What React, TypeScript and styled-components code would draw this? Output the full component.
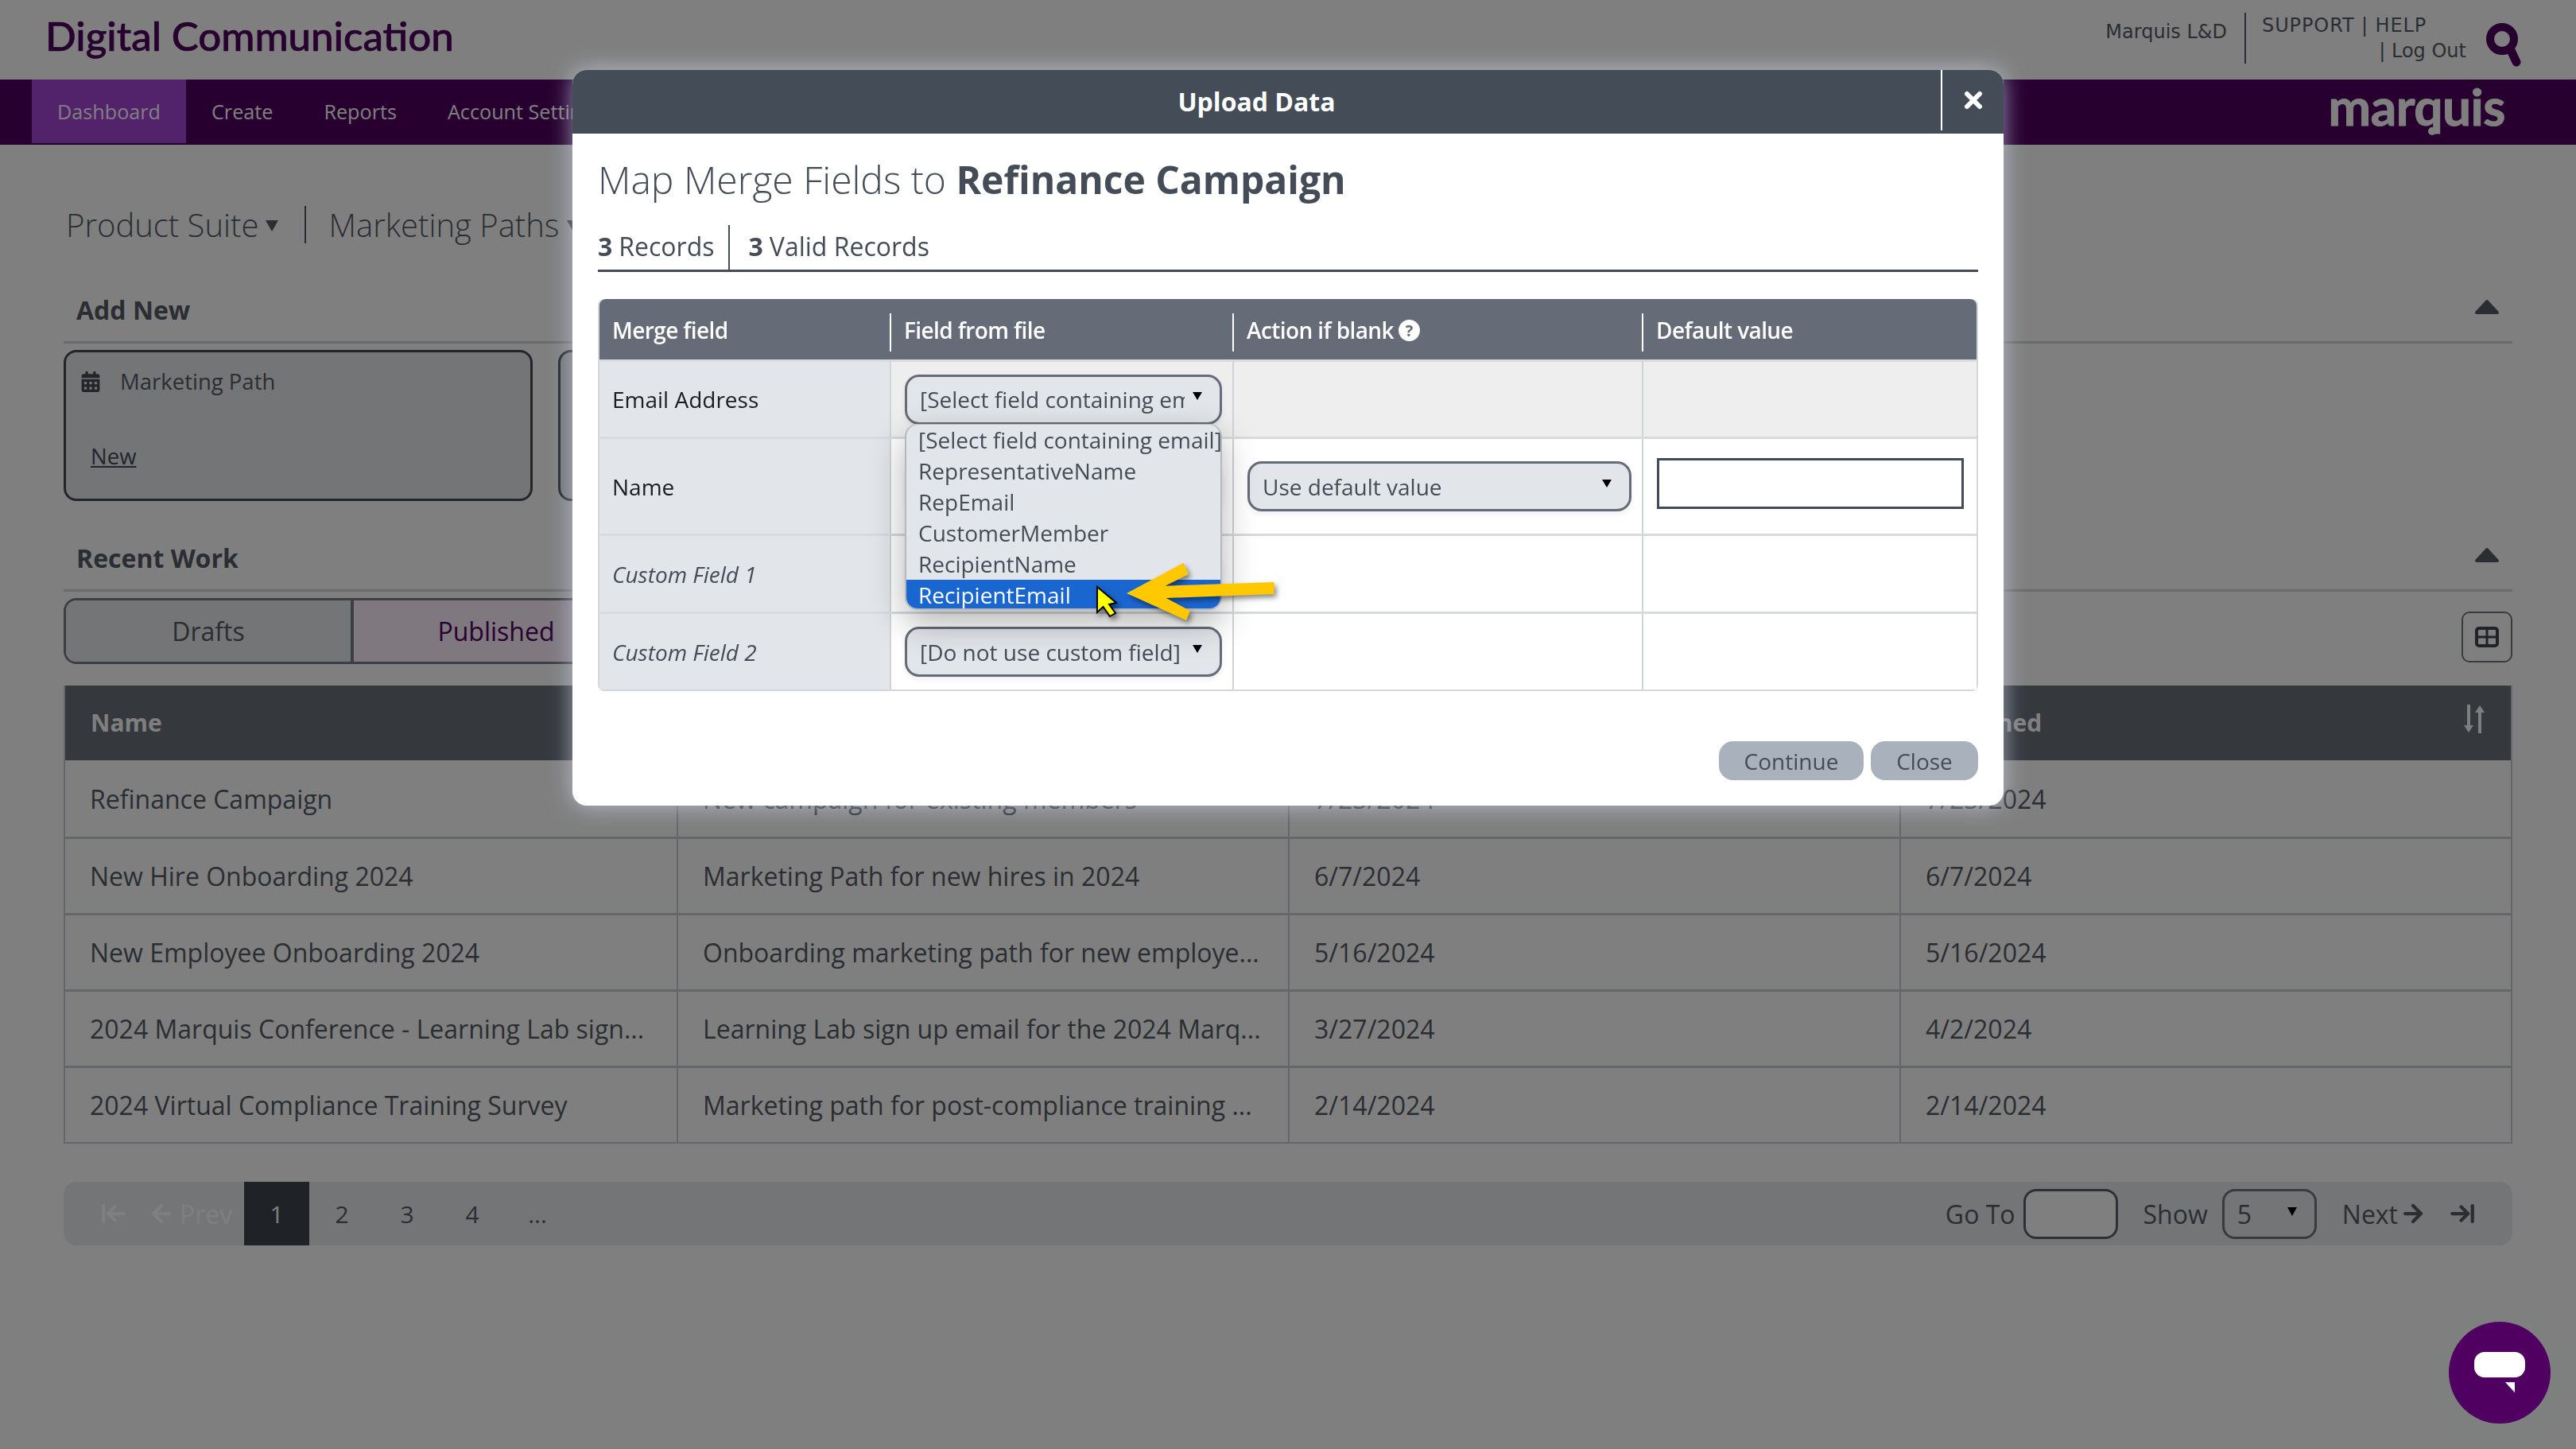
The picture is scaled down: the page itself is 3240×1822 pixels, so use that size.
import React from 'react';
import styled, { createGlobalStyle } from 'styled-components';
import { ArrowLeft, ArrowLeftToLine, ArrowRight, ArrowRightToLine } from 'lucide-react';
import { FaCalendarAlt } from 'react-icons/fa';

const ink = '#555c66';
const slate = '#444c57';
const purple = '#4f0060';

const GlobalStyle = createGlobalStyle`
  html, body {
    margin: 0;
    width: 3240px;
    height: 1822px;
    overflow: hidden;
    background: #fff;
    font-family: 'Open Sans', 'Liberation Sans', sans-serif;
    color: ${ink};
  }
  * { box-sizing: border-box; }
`;

const Page = styled.div`
  width: 3240px;
  height: 1822px;
  overflow: hidden;
`;

const Header = styled.header`
  height: 100px;
  display: flex;
  align-items: center;
  padding: 0 68px 0 57px;
`;

const AppTitle = styled.h1`
  margin: 0 0 12px;
  font-family: Lato, sans-serif;
  font-size: 51px;
  font-weight: 500;
  -webkit-text-stroke: 0.7px ${purple};
  color: ${purple};
`;

const HeaderRight = styled.div`
  margin-left: auto;
  display: flex;
  align-items: center;
  font-family: 'DejaVu Sans', sans-serif;
  font-size: 24px;
`;

const AccountName = styled.span`
  padding-right: 22px;
  margin-bottom: 20px;
`;

const Links = styled.div`
  width: 279px;
  height: 64px;
  margin-bottom: 4px;
  padding-left: 20px;
  border-left: 2px solid ${ink};
  display: flex;
  flex-direction: column;
  justify-content: space-between;
`;

const LinkRow = styled.div<{ $end?: boolean }>`
  align-self: ${(p) => (p.$end ? 'flex-end' : 'flex-start')};
  line-height: 32px;
  letter-spacing: ${(p) => (p.$end ? '0' : '0.9px')};
`;

const SearchIcon = styled.svg`
  margin: 14px 0 0 24px;
  display: block;
`;

const Nav = styled.nav`
  height: 82px;
  padding: 0 89px 2px 40px;
  background: ${purple};
  display: flex;
  align-items: stretch;
`;

const NavItem = styled.a<{ $active?: boolean }>`
  padding: 0 32px;
  display: flex;
  align-items: center;
  font-size: 25.2px;
  color: #fff;
  background: ${(p) => (p.$active ? '#a444d6' : 'transparent')};
`;

const Logo = styled.div`
  margin-left: auto;
  position: relative;
  align-self: center;
  font-family: Lato, sans-serif;
  font-size: 64px;
  line-height: 66px;
  font-weight: 700;
  letter-spacing: -0.5px;
  -webkit-text-stroke: 1px #fff;
  color: #fff;
  margin-top: -12px;
`;

const LogoDot = styled.i`
  position: absolute;
  left: 125px;
  bottom: -3px;
  width: 10px;
  height: 10px;
  border-radius: 50%;
  background: #fff;
`;

const Content = styled.main`
  padding: 77px 80px 0;
`;

const SuiteBar = styled.div`
  height: 47px;
  padding-left: 3px;
  display: flex;
  align-items: center;
  font-size: 40px;
  font-weight: 300;
`;

const Caret = styled.i<{ $size?: number; $dark?: boolean }>`
  display: inline-block;
  width: 0;
  height: 0;
  border-left: ${(p) => (p.$size ?? 8) * 0.62}px solid transparent;
  border-right: ${(p) => (p.$size ?? 8) * 0.62}px solid transparent;
  border-top: ${(p) => p.$size ?? 8}px solid ${(p) => (p.$dark ? '#000' : ink)};
`;

const SuiteCaret = styled(Caret)`
  margin: 2px 33px 0 9px;
`;

const SuiteSep = styled.span`
  width: 2px;
  height: 47px;
  margin-right: 28px;
  background: ${ink};
`;

const SectionHead = styled.div<{ $gap: number }>`
  margin-top: ${(p) => p.$gap}px;
  height: 82px;
  padding: 0 16px;
  display: flex;
  align-items: center;
  justify-content: space-between;
  border-bottom: 3px solid #d4d6da;
`;

const SectionTitle = styled.h2`
  margin: 0;
  font-size: 32px;
  font-weight: 700;
`;

const CollapseIcon = styled.svg`
  display: block;
  margin-bottom: 8px;
`;

const Cards = styled.div`
  margin-top: 8px;
  display: flex;
  gap: 32px;
`;

const Card = styled.div`
  width: 590px;
  height: 190px;
  padding: 18px 18px 35px;
  border: 3px solid ${slate};
  border-radius: 16px;
  background: #e8eaee;
  display: flex;
  flex-direction: column;
  justify-content: space-between;
  font-size: 27.5px;
`;

const CardLabel = styled.div`
  display: flex;
  align-items: center;
  gap: 24px;
  svg { font-size: 26px; color: ${slate}; }
`;

const CardLink = styled.a`
  margin-left: 13px;
  text-decoration: underline;
  color: ${slate};
`;

const Toolbar = styled.div`
  margin-top: 8px;
  height: 83px;
  display: flex;
  align-items: center;
  justify-content: space-between;
`;

const Tabs = styled.div`
  height: 83px;
  display: flex;
  border: 3px solid #777d87;
  border-radius: 16px;
  overflow: hidden;
`;

const Tab = styled.div<{ $active?: boolean; $width: number }>`
  width: ${(p) => p.$width}px;
  display: flex;
  align-items: center;
  justify-content: center;
  font-size: 32px;
  color: ${(p) => (p.$active ? purple : ink)};
  background: ${(p) => (p.$active ? '#fef0ff' : '#e8eaee')};
  & + & { border-left: 4px solid #777d87; }
`;

const GridButton = styled.div`
  width: 64px;
  height: 64px;
  margin-top: 14px;
  border: 2px solid #70767f;
  border-radius: 10px;
  display: flex;
  align-items: center;
  justify-content: center;
`;

const DataTable = styled.div`
  margin-top: 27px;
  border: 2px solid #c8ccd2;
  border-top: 0;
`;

const DataHead = styled.div`
  height: 94px;
  display: grid;
  grid-template-columns: repeat(4, 1fr);
  align-items: center;
  padding-bottom: 2px;
  background: #6a707a;
  color: #fff;
  font-size: 30px;
  font-weight: 700;
`;

const HeadCell = styled.div`
  padding-left: 32px;
  display: flex;
  justify-content: space-between;
  align-items: center;
  svg { margin-right: 32px; margin-top: -8px; }
`;

const DataRow = styled.div`
  height: 96px;
  display: grid;
  grid-template-columns: repeat(4, 1fr);
  & + & { border-top: 3px solid #c8ccd2; }
`;

const DataCell = styled.div`
  padding-left: 31px;
  display: flex;
  align-items: center;
  font-size: 32px;
  font-weight: 400;
  white-space: nowrap;
  & + & { border-left: 2px solid #c8ccd2; }
`;

const Pager = styled.div`
  margin-top: 48px;
  height: 80px;
  padding: 0 46px 0 46px;
  border-radius: 16px;
  background: #e8eaee;
  display: flex;
  align-items: center;
  font-size: 32px;
  font-weight: 400;
`;

const PagerDisabled = styled.div`
  width: 181px;
  display: flex;
  align-items: center;
  color: #fff;
  gap: 6px;
`;

const FirstIcon = styled(ArrowLeftToLine)`
  margin-right: 20px;
`;

const PageNum = styled.div<{ $active?: boolean }>`
  width: 82px;
  height: 80px;
  display: flex;
  align-items: center;
  justify-content: center;
  font-size: 30px;
  color: ${(p) => (p.$active ? '#fff' : ink)};
  background: ${(p) => (p.$active ? '#3e444e' : 'transparent')};
`;

const PagerRight = styled.div`
  margin-left: auto;
  display: flex;
  align-items: center;
`;

const SmallBox = styled.div<{ $gap: number }>`
  width: 119px;
  height: 63px;
  margin: 0 ${(p) => p.$gap}px 0 10px;
  padding: 0 22px 0 16px;
  border: 3px solid #5b626c;
  border-radius: 16px;
  display: flex;
  align-items: center;
  justify-content: space-between;
  background: #fff;
`;

const ShowBox = styled(SmallBox)`
  margin-left: 18px;
  background: #e8eaee;
  border-color: #70767f;
`;

const ShowCaret = styled(Caret)`
  margin-top: -6px;
`;

const NextIcon = styled(ArrowRight)`
  margin: 0 28px 0 2px;
`;

const Overlay = styled.div`
  position: fixed;
  inset: 0;
  background: rgba(0, 0, 0, 0.5);
`;

const Modal = styled.section`
  position: fixed;
  left: 720px;
  top: 88px;
  width: 1800px;
  height: 925px;
  border-radius: 18px;
  background: #fff;
  box-shadow: 0 0 28px rgba(205, 215, 235, 0.7);
  color: ${slate};
`;

const ModalHead = styled.div`
  height: 80px;
  display: flex;
  align-items: stretch;
  border-radius: 18px 18px 0 0;
  background: ${slate};
  color: #fff;
`;

const ModalTitle = styled.div`
  flex: 1;
  display: flex;
  align-items: center;
  justify-content: center;
  font-size: 32px;
  font-weight: 700;
  padding-bottom: 2px;
`;

const ModalClose = styled.div`
  width: 79px;
  height: 76px;
  border-left: 2px solid #fff;
  display: flex;
  align-items: center;
  justify-content: center;
`;

const ModalBody = styled.div`
  position: relative;
  padding: 0 32px;
`;

const MapTitle = styled.h3`
  margin: 0;
  height: 115px;
  padding-top: 28px;
  font-size: 48px;
  line-height: 60px;
  font-weight: 300;
  b { font-weight: 700; }
`;

const Counts = styled.div`
  height: 59px;
  display: flex;
  align-items: stretch;
  border-bottom: 3px solid ${slate};
  font-size: 32px;
  font-weight: 400;
  b { font-weight: 700; }
`;

const Count = styled.div`
  padding: 0 17px 4px 0;
  display: flex;
  align-items: center;
  gap: 8px;
  & + & { border-left: 2px solid ${slate}; padding-left: 24px; }
`;

const MapTable = styled.div`
  margin-top: 34px;
  width: 1736px;
  border-radius: 8px;
  border: 2px solid #d4d7dc;
  border-top: 0;
`;

const mapColumns = '365px 431px 515px 1fr';

const MapHead = styled.div`
  height: 76px;
  display: grid;
  grid-template-columns: ${mapColumns};
  align-items: center;
  border-radius: 8px 8px 0 0;
  background: #666c77;
  color: #fff;
  font-size: 28px;
  font-weight: 600;
  letter-spacing: -0.6px;
`;

const MapHeadCell = styled.div`
  height: 48px;
  margin-top: 8px;
  padding: 0 0 6px 16px;
  display: flex;
  align-items: center;
  gap: 6px;
  & + & { border-left: 2px solid #fff; }
`;

const HelpIcon = styled.span`
  width: 27px;
  height: 27px;
  border-radius: 50%;
  background: #fff;
  color: #666c77;
  font-size: 20px;
  font-weight: 700;
  display: flex;
  align-items: center;
  justify-content: center;
  letter-spacing: 0;
`;

const MapRow = styled.div<{ $height: number; $shaded?: boolean }>`
  height: ${(p) => p.$height}px;
  display: grid;
  grid-template-columns: ${mapColumns};
  background: ${(p) => (p.$shaded ? '#eeeeee' : '#fff')};
  border-top: 3px solid #d8dade;
  &:first-of-type { border-top: 0; }
`;

const MapCell = styled.div<{ $label?: boolean; $italic?: boolean }>`
  display: flex;
  align-items: center;
  padding-left: ${(p) => (p.$label ? 16 : 17)}px;
  padding-right: 13px;
  font-size: 28px;
  background: ${(p) => (p.$label ? '#e2e5ea' : 'transparent')};
  color: ${(p) => (p.$italic ? slate : p.$label ? '#1a1d22' : slate)};
  font-style: ${(p) => (p.$italic ? 'italic' : 'normal')};
  & + & { border-left: 2px solid #cfd3da; }
`;

const SelectWrap = styled.div`
  position: relative;
  width: 100%;
`;

const SelectBox = styled.div`
  height: 63px;
  padding: 0 22px 0 16px;
  border: 3px solid #666c77;
  border-radius: 18px;
  background: #e2e5ea;
  display: flex;
  align-items: center;
  justify-content: space-between;
  white-space: nowrap;
  box-shadow: 0 4px 6px rgba(0, 0, 0, 0.06);
`;

const SelectText = styled.span`
  flex: 1;
  overflow: hidden;
  margin-right: 10px;
`;

const SelectCaret = styled(Caret)`
  margin: -8px 0 0;
  flex: none;
`;

const Menu = styled.ul`
  position: absolute;
  z-index: 5;
  top: 62px;
  left: 0;
  width: 399px;
  height: 234px;
  margin: 0;
  padding: 0;
  list-style: none;
  border: 2px solid #b4b7bc;
  border-top-width: 1px;
  border-radius: 16px;
  background: #e2e5ea;
  overflow: hidden;
  box-shadow: 0 16px 44px rgba(0, 0, 0, 0.3);
`;

const MenuItem = styled.li<{ $active?: boolean }>`
  height: 39px;
  padding-left: 15px;
  display: flex;
  align-items: center;
  white-space: nowrap;
  color: ${(p) => (p.$active ? '#fff' : slate)};
  background: ${(p) => (p.$active ? '#1a66d0' : 'transparent')};
`;

const DefaultInput = styled.div`
  width: 386px;
  height: 64px;
  margin: -8px 0 0;
  border: 3px solid ${slate};
  background: #fff;
`;

const ModalFoot = styled.div`
  margin-top: 63px;
  width: 1736px;
  display: flex;
  justify-content: flex-end;
  gap: 9px;
`;

const FootButton = styled.div<{ $width: number }>`
  width: ${(p) => p.$width}px;
  height: 49px;
  border-radius: 18px;
  background: #a9b1bd;
  display: flex;
  align-items: center;
  justify-content: center;
  font-size: 28px;
`;

const Annotation = styled.svg`
  position: absolute;
  z-index: 6;
  left: 650px;
  top: 532px;
  overflow: visible;
  filter: drop-shadow(3px 4px 3px rgba(0, 0, 0, 0.45));
`;

const ChatButton = styled.div`
  position: fixed;
  left: 3080px;
  top: 1662px;
  width: 128px;
  height: 128px;
  border-radius: 50%;
  background: ${purple};
  box-shadow: 0 6px 30px rgba(120, 140, 140, 0.25);
  display: flex;
  align-items: center;
  justify-content: center;
`;

const rows = [
  ['Refinance Campaign', 'New campaign for existing members', '7/23/2024', '7/23/2024'],
  ['New Hire Onboarding 2024', 'Marketing Path for new hires in 2024', '6/7/2024', '6/7/2024'],
  ['New Employee Onboarding 2024', 'Onboarding marketing path for new employe...', '5/16/2024', '5/16/2024'],
  ['2024 Marquis Conference - Learning Lab sign...', 'Learning Lab sign up email for the 2024 Marq...', '3/27/2024', '4/2/2024'],
  ['2024 Virtual Compliance Training Survey', 'Marketing path for post-compliance training ...', '2/14/2024', '2/14/2024'],
];

const fileFields = ['[Select field containing email]', 'RepresentativeName', 'RepEmail', 'CustomerMember', 'RecipientName', 'RecipientEmail'];

function Collapse() {
  return (
    <CollapseIcon width="32" height="20" viewBox="0 0 32 20">
      <path d="M16 3 L29 17 H3 Z" fill="#555c66" stroke="#555c66" strokeWidth="4" strokeLinejoin="round" />
    </CollapseIcon>
  );
}

function SortIcon() {
  return (
    <svg width="28" height="36" viewBox="0 0 28 36" fill="#fff">
      <rect x="5" y="0" width="4" height="30" />
      <path d="M1 26 H13 L7 35 Z" />
      <rect x="19" y="6" width="4" height="30" />
      <path d="M15 10 H27 L21 1 Z" />
    </svg>
  );
}

function FieldSelect({ label, open }: { label?: string; open?: boolean }) {
  return (
    <SelectWrap>
      <SelectBox>
        <SelectText>{label}</SelectText>
        <SelectCaret $size={10} $dark />
      </SelectBox>
      {open && (
        <Menu>
          {fileFields.map((field) => (
            <MenuItem key={field} $active={field === 'RecipientEmail'}>
              {field}
            </MenuItem>
          ))}
        </Menu>
      )}
    </SelectWrap>
  );
}

export default function App() {
  return (
    <>
      <GlobalStyle />
      <Page>
        <Header>
          <AppTitle>Digital Communication</AppTitle>
          <HeaderRight>
            <AccountName>Marquis L&amp;D</AccountName>
            <Links>
              <LinkRow>SUPPORT | HELP</LinkRow>
              <LinkRow $end>| Log Out</LinkRow>
            </Links>
            <SearchIcon width="46" height="56" viewBox="0 0 46 56" fill="none" stroke={purple}>
              <ellipse cx="21" cy="20" rx="15" ry="15" strokeWidth="10" />
              <path d="M32 34 L39 49" strokeWidth="11" strokeLinecap="round" />
            </SearchIcon>
          </HeaderRight>
        </Header>
        <Nav>
          <NavItem $active>Dashboard</NavItem>
          <NavItem>Create</NavItem>
          <NavItem>Reports</NavItem>
          <NavItem>Account Settings</NavItem>
          <Logo>
            marquis
            <LogoDot />
          </Logo>
        </Nav>
        <Content>
          <SuiteBar>
            Product Suite
            <SuiteCaret $size={14} />
            <SuiteSep />
            Marketing Paths
            <SuiteCaret $size={14} />
          </SuiteBar>
          <SectionHead $gap={44}>
            <SectionTitle>Add New</SectionTitle>
            <Collapse />
          </SectionHead>
          <Cards>
            <Card>
              <CardLabel>
                <FaCalendarAlt />
                Marketing Path
              </CardLabel>
              <CardLink>New</CardLink>
            </Card>
            <Card />
          </Cards>
          <SectionHead $gap={32}>
            <SectionTitle>Recent Work</SectionTitle>
            <Collapse />
          </SectionHead>
          <Toolbar>
            <Tabs>
              <Tab $width={358}>Drafts</Tab>
              <Tab $width={362} $active>
                Published
              </Tab>
            </Tabs>
            <GridButton>
              <svg width="30" height="26" viewBox="0 0 30 26" fill="none" stroke="#3e444e" strokeWidth="4">
                <rect x="2" y="2" width="26" height="22" rx="3" />
                <path d="M15 2 V24 M2 13 H28" strokeWidth="3" />
              </svg>
            </GridButton>
          </Toolbar>
          <DataTable>
            <DataHead>
              <HeadCell>Name</HeadCell>
              <HeadCell>Description</HeadCell>
              <HeadCell>Created</HeadCell>
              <HeadCell>
                Published
                <SortIcon />
              </HeadCell>
            </DataHead>
            {rows.map((row) => (
              <DataRow key={row[0]}>
                {row.map((cell, i) => (
                  <DataCell key={i}>{cell}</DataCell>
                ))}
              </DataRow>
            ))}
          </DataTable>
          <Pager>
            <PagerDisabled>
              <FirstIcon size={34} strokeWidth={3} />
              <ArrowLeft size={34} strokeWidth={3} />
              Prev
            </PagerDisabled>
            <PageNum $active>1</PageNum>
            <PageNum>2</PageNum>
            <PageNum>3</PageNum>
            <PageNum>4</PageNum>
            <PageNum>...</PageNum>
            <PagerRight>
              Go To
              <SmallBox $gap={32} />
              Show
              <ShowBox $gap={32}>
                5
                <ShowCaret $size={11} $dark />
              </ShowBox>
              Next
              <NextIcon size={34} strokeWidth={3} />
              <ArrowRightToLine size={34} strokeWidth={3} />
            </PagerRight>
          </Pager>
        </Content>
      </Page>
      <Overlay />
      <Modal>
        <ModalHead>
          <ModalTitle>Upload Data</ModalTitle>
          <ModalClose>
            <svg width="24" height="24" viewBox="0 0 24 24" stroke="#fff" strokeWidth="6" strokeLinecap="round">
              <path d="M4 4 L20 20 M20 4 L4 20" />
            </svg>
          </ModalClose>
        </ModalHead>
        <ModalBody>
          <MapTitle>
            Map Merge Fields to <b>Refinance Campaign</b>
          </MapTitle>
          <Counts>
            <Count>
              <b>3</b> Records
            </Count>
            <Count>
              <b>3</b> Valid Records
            </Count>
          </Counts>
          <MapTable>
            <MapHead>
              <MapHeadCell>Merge field</MapHeadCell>
              <MapHeadCell>Field from file</MapHeadCell>
              <MapHeadCell>
                Action if blank
                <HelpIcon>?</HelpIcon>
              </MapHeadCell>
              <MapHeadCell>Default value</MapHeadCell>
            </MapHead>
            <MapRow $height={97} $shaded>
              <MapCell $label>Email Address</MapCell>
              <MapCell>
                <FieldSelect label="[Select field containing email]" open />
              </MapCell>
              <MapCell />
              <MapCell />
            </MapRow>
            <MapRow $height={122}>
              <MapCell $label>Name</MapCell>
              <MapCell>
                <FieldSelect />
              </MapCell>
              <MapCell>
                <FieldSelect label="Use default value" />
              </MapCell>
              <MapCell>
                <DefaultInput />
              </MapCell>
            </MapRow>
            <MapRow $height={98}>
              <MapCell $label $italic>
                Custom Field 1
              </MapCell>
              <MapCell>
                <FieldSelect />
              </MapCell>
              <MapCell />
              <MapCell />
            </MapRow>
            <MapRow $height={98}>
              <MapCell $label $italic>
                Custom Field 2
              </MapCell>
              <MapCell>
                <FieldSelect label="[Do not use custom field]" />
              </MapCell>
              <MapCell />
              <MapCell />
            </MapRow>
          </MapTable>
          <ModalFoot>
            <FootButton $width={182}>Continue</FootButton>
            <FootButton $width={135}>Close</FootButton>
          </ModalFoot>
          <Annotation width="250" height="90" viewBox="0 0 250 90">
            <polygon
              points="47,46 118.5,7.7 125,22 95.6,36.7 232.6,32 232.6,47 96.7,52 127,68 122,80"
              fill="#ffc800"
            />
            <path d="M10 38 V70 L17.5 63 L26 75 L33 71 L25 60 L34 58 Z" fill="#ffff00" stroke="#000" strokeWidth="2" />
          </Annotation>
        </ModalBody>
      </Modal>
      <ChatButton>
        <svg width="64" height="52" viewBox="0 0 64 52" fill="#fff">
          <rect x="0" y="0" width="64" height="32" rx="13" />
          <path d="M39 38 H51 V51 Z" />
        </svg>
      </ChatButton>
    </>
  );
}
